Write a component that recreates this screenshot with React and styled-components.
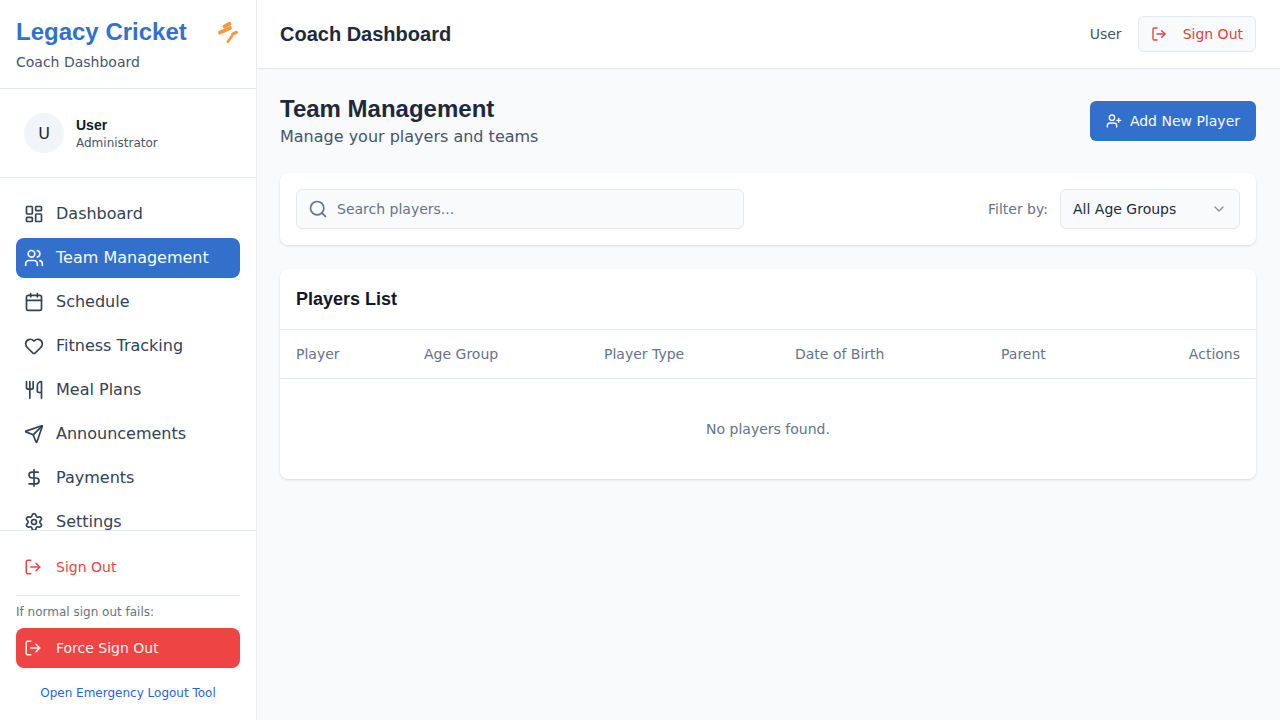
import styled, { createGlobalStyle } from 'styled-components';
import {
  LayoutDashboard, Users, Calendar, Heart, Utensils, Send, DollarSign, Settings,
  LogOut, Search, UserPlus, ChevronDown,
} from 'lucide-react';

const GlobalStyle = createGlobalStyle`
  * { box-sizing: border-box; }
  html, body { margin: 0; height: 100%; }
  body {
    font-family: "DejaVu Sans", sans-serif;
    background: #f8fafc;
    color: #1e293b;
  }
`;

const navItems = [
  { label: 'Dashboard', icon: LayoutDashboard },
  { label: 'Team Management', icon: Users, active: true },
  { label: 'Schedule', icon: Calendar },
  { label: 'Fitness Tracking', icon: Heart },
  { label: 'Meal Plans', icon: Utensils },
  { label: 'Announcements', icon: Send },
  { label: 'Payments', icon: DollarSign },
  { label: 'Settings', icon: Settings },
];

const columns = [
  { label: 'Player', width: 128 },
  { label: 'Age Group', width: 180 },
  { label: 'Player Type', width: 191 },
  { label: 'Date of Birth', width: 206 },
  { label: 'Parent', width: 150 },
  { label: 'Actions', width: 121, right: true },
];

const BrandIcon = () => (
  <svg width="24" height="24" viewBox="0 0 24 24" fill="none" stroke="#f6993f" strokeLinecap="round">
    <path d="M8.5 6.4 13.5 3.8" strokeWidth="3.8" />
    <path d="M4 12.6 14 8" strokeWidth="3.8" />
    <path d="M16.8 14 20.4 12.4" strokeWidth="3.2" />
    <path d="M12 21.5 15.8 16.2" strokeWidth="2.8" />
  </svg>
);

export default function App() {
  return (
    <>
      <GlobalStyle />
      <Layout>
        <Sidebar>
          <Brand>
            <BrandRow>
              <BrandName>Legacy Cricket</BrandName>
              <BrandIcon />
            </BrandRow>
            <BrandSub>Coach Dashboard</BrandSub>
          </Brand>

          <UserBox>
            <Avatar>U</Avatar>
            <div>
              <UserName>User</UserName>
              <UserRole>Administrator</UserRole>
            </div>
          </UserBox>

          <Nav>
            {navItems.map((item) => (
              <NavItem key={item.label} $active={item.active}>
                <item.icon size={20} />
                <span>{item.label}</span>
              </NavItem>
            ))}
          </Nav>

          <SidebarFooter>
            <FooterSignOut>
              <LogOut size={18} />
              <span>Sign Out</span>
            </FooterSignOut>
            <FooterDivider />
            <FailNote>If normal sign out fails:</FailNote>
            <ForceButton>
              <LogOut size={18} />
              <span>Force Sign Out</span>
            </ForceButton>
            <EmergencyLink>Open Emergency Logout Tool</EmergencyLink>
          </SidebarFooter>
        </Sidebar>

        <Content>
          <TopBar>
            <TopTitle>Coach Dashboard</TopTitle>
            <TopRight>
              <TopUser>User</TopUser>
              <TopSignOut>
                <LogOut size={16} />
                <span>Sign Out</span>
              </TopSignOut>
            </TopRight>
          </TopBar>

          <Main>
            <PageHead>
              <div>
                <PageTitle>Team Management</PageTitle>
                <PageSub>Manage your players and teams</PageSub>
              </div>
              <AddButton>
                <UserPlus size={16} />
                <span>Add New Player</span>
              </AddButton>
            </PageHead>

            <FilterCard>
              <SearchBox>
                <Search size={20} color="#64748b" />
                <SearchInput placeholder="Search players..." />
              </SearchBox>
              <FilterGroup>
                <FilterLabel>Filter by:</FilterLabel>
                <SelectBox>
                  <span>All Age Groups</span>
                  <SelectArrow size={16} />
                </SelectBox>
              </FilterGroup>
            </FilterCard>

            <TableCard>
              <TableTitle>Players List</TableTitle>
              <Table>
                <colgroup>
                  {columns.map((c) => <col key={c.label} width={c.width} />)}
                </colgroup>
                <thead>
                  <tr>
                    {columns.map((c) => <Th key={c.label} $right={c.right}>{c.label}</Th>)}
                  </tr>
                </thead>
                <tbody>
                  <tr>
                    <EmptyCell colSpan={6}>No players found.</EmptyCell>
                  </tr>
                </tbody>
              </Table>
            </TableCard>
          </Main>
        </Content>
      </Layout>
    </>
  );
}

const Layout = styled.div`
  display: flex;
  height: 720px;
  overflow: hidden;
`;

const Sidebar = styled.aside`
  width: 257px;
  flex: none;
  height: 720px;
  display: flex;
  flex-direction: column;
  background: #fff;
  border-right: 1px solid #e8ecf2;
`;

const Brand = styled.div`
  height: 89px;
  padding: 16px 16px 0;
  border-bottom: 1px solid #e2e8f0;
`;

const BrandRow = styled.div`
  display: flex;
  align-items: center;
  justify-content: space-between;
  height: 32px;
`;

const BrandName = styled.div`
  font-family: "Liberation Sans", sans-serif;
  font-size: 24px;
  font-weight: 700;
  color: #3370cc;
`;

const BrandSub = styled.div`
  margin-top: 4px;
  font-size: 14px;
  line-height: 20px;
  color: #475569;
`;

const UserBox = styled.div`
  height: 89px;
  padding: 0 24px;
  display: flex;
  align-items: center;
  gap: 12px;
  border-bottom: 1px solid #e2e8f0;
`;

const Avatar = styled.div`
  width: 40px;
  height: 40px;
  border-radius: 50%;
  background: #f1f5f9;
  display: flex;
  align-items: center;
  justify-content: center;
  font-size: 16px;
  color: #1e293b;
`;

const UserName = styled.div`
  font-family: "Liberation Sans", sans-serif;
  font-size: 14px;
  line-height: 20px;
  font-weight: 700;
  color: #111827;
`;

const UserRole = styled.div`
  font-size: 12px;
  line-height: 16px;
  color: #475569;
`;

const Nav = styled.nav`
  flex: 1;
  min-height: 0;
  overflow: hidden;
  padding: 16px 16px 0;
  display: flex;
  flex-direction: column;
  gap: 4px;
`;

const NavItem = styled.a`
  display: flex;
  flex: none;
  align-items: center;
  gap: 12px;
  height: 40px;
  padding: 0 8px;
  border-radius: 8px;
  font-size: 16px;
  line-height: 24px;
  background: ${(p) => (p.$active ? '#3370cc' : 'transparent')};
  color: ${(p) => (p.$active ? '#f8fafc' : '#334155')};
`;

const SidebarFooter = styled.div`
  flex: none;
  height: 190px;
  padding: 16px 16px 0;
  border-top: 1px solid #e2e8f0;
`;

const FooterSignOut = styled.a`
  display: flex;
  align-items: center;
  gap: 14px;
  height: 40px;
  padding: 0 8px;
  font-size: 14px;
  color: #ef4444;
`;

const FooterDivider = styled.div`
  margin-top: 8px;
  border-top: 1px solid #e2e8f0;
`;

const FailNote = styled.div`
  margin-top: 8px;
  font-size: 12px;
  line-height: 16px;
  color: #6b7280;
`;

const ForceButton = styled.button`
  display: flex;
  align-items: center;
  gap: 14px;
  width: 100%;
  height: 40px;
  margin-top: 8px;
  padding: 0 8px;
  border: none;
  border-radius: 8px;
  background: #ef4444;
  color: #fef2f2;
  font-family: inherit;
  font-size: 14px;
`;

const EmergencyLink = styled.a`
  display: block;
  margin-top: 17px;
  text-align: center;
  font-size: 12px;
  line-height: 16px;
  color: #2563eb;
`;

const Content = styled.div`
  flex: 1;
  min-width: 0;
  display: flex;
  flex-direction: column;
`;

const TopBar = styled.header`
  height: 69px;
  flex: none;
  padding: 0 24px 0 23px;
  display: flex;
  align-items: center;
  justify-content: space-between;
  background: #fff;
  border-bottom: 1px solid #e2e8f0;
`;

const TopTitle = styled.div`
  font-family: "Liberation Sans", sans-serif;
  font-size: 20px;
  font-weight: 700;
  color: #1e293b;
`;

const TopRight = styled.div`
  display: flex;
  align-items: center;
  gap: 16px;
`;

const TopUser = styled.span`
  font-size: 14px;
  color: #475569;
`;

const TopSignOut = styled.button`
  display: flex;
  align-items: center;
  gap: 16px;
  height: 36px;
  padding: 0 12px;
  border: 1px solid #e2e8f0;
  border-radius: 6px;
  background: #f8fafc;
  color: #e53e3e;
  font-family: inherit;
  font-size: 14px;
`;

const Main = styled.main`
  padding: 24px 24px 0 23px;
`;

const PageHead = styled.div`
  display: flex;
  align-items: center;
  justify-content: space-between;
  margin-bottom: 24px;
`;

const PageTitle = styled.h1`
  margin: 0;
  font-family: "Liberation Sans", sans-serif;
  font-size: 24px;
  line-height: 32px;
  font-weight: 700;
  color: #1e293b;
`;

const PageSub = styled.p`
  margin: 0;
  font-size: 16px;
  line-height: 24px;
  color: #475569;
`;

const AddButton = styled.button`
  display: flex;
  align-items: center;
  gap: 8px;
  height: 40px;
  padding: 0 16px;
  border: none;
  border-radius: 6px;
  background: #3370cc;
  color: #f8fafc;
  font-family: inherit;
  font-size: 14px;
`;

const FilterCard = styled.div`
  display: flex;
  align-items: center;
  justify-content: space-between;
  padding: 16px;
  margin-bottom: 24px;
  background: #fff;
  border-radius: 8px;
  box-shadow: 0 1px 3px rgba(0, 0, 0, 0.1), 0 1px 2px -1px rgba(0, 0, 0, 0.1);
`;

const SearchBox = styled.div`
  display: flex;
  align-items: center;
  gap: 9px;
  width: 448px;
  height: 40px;
  padding: 0 11px;
  background: #f8fafc;
  border: 1px solid #e2e8f0;
  border-radius: 6px;
`;

const SearchInput = styled.input`
  flex: 1;
  min-width: 0;
  padding: 0;
  border: none;
  outline: none;
  background: transparent;
  font-family: inherit;
  font-size: 14px;
  color: #1e293b;

  &::placeholder {
    color: #64748b;
    opacity: 1;
  }
`;

const FilterGroup = styled.div`
  display: flex;
  align-items: center;
  gap: 12px;
`;

const FilterLabel = styled.span`
  font-size: 14px;
  color: #64748b;
`;

const SelectBox = styled.div`
  display: flex;
  align-items: center;
  justify-content: space-between;
  width: 180px;
  height: 40px;
  padding: 0 12px;
  background: #f8fafc;
  border: 1px solid #e2e8f0;
  border-radius: 6px;
  font-size: 14px;
  color: #1e293b;
`;

const SelectArrow = styled(ChevronDown)`
  color: #1e293b;
  opacity: 0.5;
`;

const TableCard = styled.section`
  background: #fff;
  border-radius: 8px;
  overflow: hidden;
  box-shadow: 0 1px 3px rgba(0, 0, 0, 0.1), 0 1px 2px -1px rgba(0, 0, 0, 0.1);
`;

const TableTitle = styled.h2`
  margin: 0;
  height: 61px;
  padding: 0 16px;
  display: flex;
  align-items: center;
  font-family: "Liberation Sans", sans-serif;
  font-size: 18px;
  font-weight: 700;
  color: #111827;
  border-bottom: 1px solid #e2e8f0;
`;

const Table = styled.table`
  width: 100%;
  table-layout: fixed;
  border-collapse: collapse;
`;

const Th = styled.th`
  height: 48px;
  padding: 0 16px;
  font-size: 14px;
  font-weight: 400;
  color: #64748b;
  text-align: ${(p) => (p.$right ? 'right' : 'left')};
  border-bottom: 1px solid #e2e8f0;
`;

const EmptyCell = styled.td`
  height: 101px;
  text-align: center;
  font-size: 14px;
  color: #64748b;
`;
